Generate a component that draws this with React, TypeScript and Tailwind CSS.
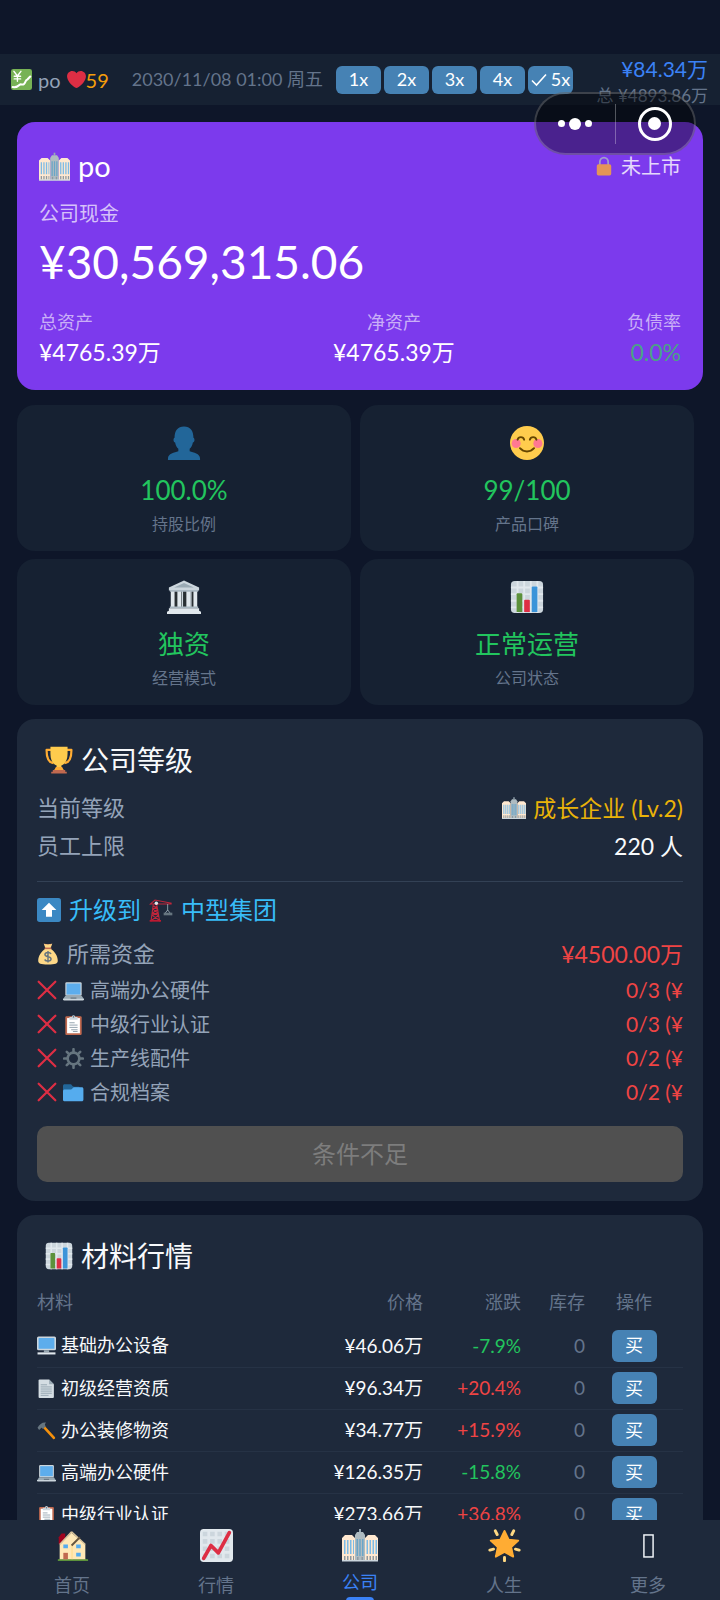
import type { ReactNode } from "react";

type IconProps = { className: string };

function Emoji({ className, children }: { className: string; children: ReactNode }) {
  return (
    <svg viewBox="0 0 36 36" className={`shrink-0 ${className}`} aria-hidden="true">
      {children}
    </svg>
  );
}

const YenChart = ({ className }: IconProps) => (
  <Emoji className={className}>
    <rect width="36" height="36" rx="4" fill="#77b255" />
    <path d="M5 4l6 8 6-8M11 12v9M5.500 12.500h11M5.500 17h11" stroke="#fff" strokeWidth="2.400" fill="none" strokeLinecap="round" />
    <path d="M3 31c6 1 9-1 12-4 2-2 4 1 7-1 4-3 2-7 6-8l5-5" stroke="#fff" strokeWidth="3.600" fill="none" strokeLinecap="round" />
  </Emoji>
);

const Heart = ({ className }: IconProps) => (
  <Emoji className={className}>
    <path
      fill="#dd2e44"
      d="M35.885 11.833c0-5.45-4.418-9.868-9.867-9.868-3.308 0-6.227 1.633-8.018 4.129-1.791-2.496-4.71-4.129-8.017-4.129-5.45 0-9.868 4.417-9.868 9.868 0 .772.098 1.52.266 2.241C1.751 22.587 11.216 31.568 18 34.034c6.783-2.466 16.249-11.447 17.617-19.959.17-.721.268-1.469.268-2.242z"
    />
  </Emoji>
);

const Offices = ({ className }: IconProps) => (
  <Emoji className={className}>
    <path fill="#99aab5" d="M17 2h2v3h-2z" />
    <path fill="#aebbc1" d="M13 34V8l2-3h6l2 3v26z" />
    <path fill="#ffe8d0" d="M0 34V11l3-3h7l3 3v23zM23 34V11l3-3h7l3 3v23z" />
    <path fill="#7dbbe6" d="M2 13h1.500v14H2zM5 13h1.500v14H5zM8 13h1.500v14H8zM11 13h1v14h-1zM24.500 13H26v14h-1.500zM27.500 13H29v14h-1.500zM30.500 13H32v14h-1.500zM33.500 13H35v14h-1.500z" />
    <path fill="#6aa5c8" d="M14.500 12H16v17h-1.500zM17.300 12h1.400v17h-1.400zM20 12h1.500v17H20z" />
    <path fill="#8d9aa2" d="M2 29h1.500v4H2zM5 29h1.500v4H5zM8 29h1.500v4H8zM11 29h1v4h-1zM24.500 29H26v4h-1.500zM27.500 29H29v4h-1.500zM30.500 29H32v4h-1.500zM33.500 29H35v4h-1.500zM15 30h1.500v4H15zM19.500 30H21v4h-1.500z" />
    <path fill="#ccd6dd" d="M0 33h36v1.500H0z" />
  </Emoji>
);

const Lock = ({ className }: IconProps) => (
  <Emoji className={className}>
    <path d="M10.500 17v-6a7.500 8 0 0 1 15 0v6" fill="none" stroke="#aab8c2" strokeWidth="3.200" />
    <rect x="5" y="15" width="26" height="20" rx="3" fill="#ffac33" />
  </Emoji>
);

const Person = ({ className }: IconProps) => (
  <Emoji className={className}>
    <path
      fill="#226699"
      d="M24 26.800v-2.600c1.600-1.200 2.900-3.900 3.400-6.700.9 0 1.700-1.100 1.700-2.600 0-1.300-.4-2.200-1.100-2.500C28 5 24.600.500 18 .500S8 5 8 12.400c-.7.300-1.100 1.200-1.100 2.500 0 1.500.8 2.600 1.700 2.600.5 2.800 1.800 5.500 3.400 6.700v2.600C8 28.300 1 29 1 34.500V36h34v-1.500c0-5.500-7-6.200-11-7.700z"
    />
  </Emoji>
);

const Smile = ({ className }: IconProps) => (
  <Emoji className={className}>
    <circle cx="18" cy="18" r="18" fill="#ffcc4d" />
    <circle cx="6.500" cy="18.500" r="4.800" fill="#ff7892" />
    <circle cx="29.500" cy="18.500" r="4.800" fill="#ff7892" />
    <path d="M8 14.500c1-3.600 6-3.600 7 0M21 14.500c1-3.600 6-3.600 7 0M10.500 23.500c4 4.600 11 4.600 15 0" fill="none" stroke="#664500" strokeWidth="2" strokeLinecap="round" />
  </Emoji>
);

const Bank = ({ className }: IconProps) => (
  <Emoji className={className}>
    <path fill="#292f33" d="M4 12h28v18H4z" />
    <path fill="#e1e8ed" d="M4 11h4v18H4zM11 11h4v18h-4zM20.500 11h4v18h-4zM28 11h4v18h-4z" />
    <path fill="#ccd6dd" d="M15.500 11h1.500v18h-1.500zM24.500 11H26v18h-1.500z" />
    <path fill="#ccd6dd" d="M18 .500L34 8v3H2V8z" />
    <path fill="#9aaab4" d="M18 3.200L28.500 8h-21z" />
    <path fill="#aab8c2" d="M3 10.500h30v2H3zM3 28h30v2H3z" />
    <path fill="#e1e8ed" d="M2 30h32v2.500l2 1V36H0v-2.500l2-1z" />
  </Emoji>
);

const Bars = ({ className }: IconProps) => (
  <Emoji className={className}>
    <rect x="1" y="1" width="34" height="34" rx="4" fill="#ccd6dd" />
    <path stroke="#e1e8ed" strokeWidth="2" d="M8 1v34M15 1v34M22 1v34M29 1v34M1 8h34M1 15h34M1 22h34M1 29h34" />
    <path fill="#5c913b" d="M7 34V15a1 1 0 0 1 1-1h4a1 1 0 0 1 1 1v19z" />
    <path fill="#dd2e44" d="M15 34V22a1 1 0 0 1 1-1h4a1 1 0 0 1 1 1v12z" />
    <path fill="#3b94d9" d="M23 34V8a1 1 0 0 1 1-1h4a1 1 0 0 1 1 1v26z" />
  </Emoji>
);

const Trophy = ({ className }: IconProps) => (
  <Emoji className={className}>
    <path d="M9 5H2c0 8 1 16 9 17M27 5h7c0 8-1 16-9 17" fill="none" stroke="#ffac33" strokeWidth="2.800" strokeLinejoin="round" />
    <path fill="#ffcc4d" d="M7 1h22v9c0 9-4 14-8 15 0 3 1 4 3 6H12c2-2 3-3 3-6-4-1-8-6-8-15z" />
    <path fill="#ffac33" d="M14 27h8l2 4H12z" />
    <path fill="#c1694f" d="M10 31h16v2h2v2.500H8V33h2z" />
  </Emoji>
);

const UpArrow = ({ className }: IconProps) => (
  <Emoji className={className}>
    <rect width="36" height="36" rx="4" fill="#3b88c3" />
    <path fill="#fff" d="M18 7l11 11h-6.500v10h-9V18H7z" />
  </Emoji>
);

const Crane = ({ className }: IconProps) => (
  <Emoji className={className}>
    <path d="M3 35L6.500 9h5L16 35M4.500 33L14 26 6 22l7-5-6-5M15 33L5 26l8-4-7-5 6-5M1 10l8-7 25 5M2 9h32" fill="none" stroke="#c1263b" strokeWidth="1.600" />
    <path fill="#be1931" d="M1 33h17v2.500H1z" />
    <circle cx="11" cy="8" r="2.600" fill="#e1e8ed" />
    <path d="M28 9v10M28 18l-4 5M28 18l4 5" stroke="#99aab5" strokeWidth="1.300" />
    <path fill="#66757f" d="M22 22h13v4H22z" />
  </Emoji>
);

const MoneyBag = ({ className }: IconProps) => (
  <Emoji className={className}>
    <path fill="#bf6952" d="M12 1c2 1.500 10 1.500 12 0l-1 5H13z" />
    <path fill="#fdd888" d="M11 1c3 2 11 2 14 0l-3 8c7 5 12 12 12 20 0 5-4 6-16 6S2 34 2 29C2 21 7 14 14 9z" />
    <path fill="#bf6952" d="M12.500 7.500h11v2.500h-11z" />
    <path d="M23 18c-2-4-10-3-10 1 0 5 10 2 10 7 0 4-8 5-10.500 1M18 13v19" fill="none" stroke="#67757f" strokeWidth="2.400" />
  </Emoji>
);

const Cross = ({ className }: IconProps) => (
  <Emoji className={className}>
    <path d="M3 3l30 30M33 3L3 33" stroke="#dd2e44" strokeWidth="4" strokeLinecap="round" />
  </Emoji>
);

const Laptop = ({ className }: IconProps) => (
  <Emoji className={className}>
    <rect x="4" y="4" width="28" height="23" rx="2" fill="#ccd6dd" />
    <path fill="#5dadec" d="M6 6h24v19H6z" />
    <path fill="#9aaab4" d="M4 27h28l4 6H0z" />
    <path fill="#ccd6dd" d="M0 32h36v1.500c0 1-1 1.500-2 1.500H2c-1 0-2-.5-2-1.500z" />
    <path fill="#66757f" d="M13 30h10v2H13z" />
  </Emoji>
);

const Clipboard = ({ className }: IconProps) => (
  <Emoji className={className}>
    <rect x="4" y="4" width="28" height="32" rx="2" fill="#c1694f" />
    <path fill="#fff" d="M7 7h22v26H7z" />
    <path d="M11 15h9M11 19h14M11 23h14M14 27h11M17 30h8" stroke="#8899a6" strokeWidth="1.500" />
    <path fill="#ccd6dd" d="M11 5h4a3 3 0 0 1 6 0h4v5H11z" />
    <circle cx="18" cy="5" r="1.400" fill="#66757f" />
  </Emoji>
);

const Gear = ({ className }: IconProps) => (
  <Emoji className={className}>
    <circle cx="18" cy="18" r="10" fill="none" stroke="#66757f" strokeWidth="4.500" />
    <path d="M18 2v6M18 28v6M2 18h6M28 18h6M6.500 6.500l4 4M25.500 25.500l4 4M6.500 29.500l4-4M25.500 10.500l4-4" stroke="#66757f" strokeWidth="4.400" strokeLinecap="round" />
  </Emoji>
);

const Folder = ({ className }: IconProps) => (
  <Emoji className={className}>
    <path fill="#226699" d="M0 29V7c0-2 1-3 3-3h9c4 0 3 4 7 4h7c2 0 3 1 3 3v18z" />
    <path fill="#55acee" d="M2 33c-1 0-2-1-2-2V16c0-2 1-3 3-3h10c3 0 3-4 7-4h12c2 0 3 1 3 3v18c0 2-1 3-3 3z" />
  </Emoji>
);

const Monitor = ({ className }: IconProps) => (
  <Emoji className={className}>
    <rect x="0" y="1" width="36" height="26" rx="3" fill="#ccd6dd" />
    <rect x="3" y="4" width="30" height="20" rx="1" fill="#5dadec" />
    <path fill="#9aaab4" d="M13 27h10v4H13z" />
    <path fill="#e1e8ed" d="M1 31h34v4H1z" />
  </Emoji>
);

const Page = ({ className }: IconProps) => (
  <Emoji className={className}>
    <path fill="#d4dde3" d="M5 1h18l9 9v24a2 2 0 0 1-2 2H5a2 2 0 0 1-2-2V3a2 2 0 0 1 2-2z" />
    <path fill="#9aaab4" d="M23 1l9 9h-9z" />
    <path d="M7 11h12M7 15h21M7 19h21M7 23h21M7 27h21M7 31h15" stroke="#8899a6" strokeWidth="1.500" />
  </Emoji>
);

const Hammer = ({ className }: IconProps) => (
  <Emoji className={className}>
    <path d="M12 10l20 22" stroke="#f4900c" strokeWidth="5" strokeLinecap="round" />
    <path fill="#66757f" d="M1 13C5 6 10 2 17 3l-2 3c0 3 2 3 1 5l-5 4c-2-3-3-2-4-1l-3 3z" />
  </Emoji>
);

const House = ({ className }: IconProps) => (
  <Emoji className={className}>
    <path fill="#5c913b" d="M2 33c9-2 23-2 33 0v2H2z" />
    <path fill="#a0041e" d="M3 17V9l3-4h4v6z" />
    <path fill="#ffe8b6" d="M4 17L17 4l15 13v16H4z" />
    <path fill="#ffd983" d="M18 17v16h-1V17z" />
    <path d="M17 3L4 17M17 3l15 14" stroke="#d9c49c" strokeWidth="1.600" />
    <path d="M17 18l9-9" stroke="#66553f" strokeWidth="2" />
    <path fill="#55acee" d="M8 17h5v4H8zM22 17h5v4h-5zM22 26h5v4h-5z" />
    <path fill="#c1694f" d="M8 26h5v7H8z" />
  </Emoji>
);

const Rising = ({ className }: IconProps) => (
  <Emoji className={className}>
    <rect width="36" height="36" rx="4" fill="#e1e8ed" />
    <path fill="#ccd6dd" d="M3 3h5v5H3zM11 3h5v5h-5zM19 3h5v5h-5zM27 3h5v5h-5zM3 11h5v5H3zM11 11h5v5h-5zM19 11h5v5h-5zM27 11h5v5h-5zM3 19h5v5H3zM11 19h5v5h-5zM19 19h5v5h-5zM27 19h5v5h-5zM3 27h5v5H3zM11 27h5v5h-5zM19 27h5v5h-5zM27 27h5v5h-5z" />
    <path d="M4 32l8-14 8 8L32 4" fill="none" stroke="#dd2e44" strokeWidth="4" strokeLinecap="round" strokeLinejoin="round" />
  </Emoji>
);

const Star = ({ className }: IconProps) => (
  <Emoji className={className}>
    <path d="M8 2l2 4M28 2l-2 4M2 23l4-1M34 23l-4-1M18 31v3.500" stroke="#ffd983" strokeWidth="3.200" strokeLinecap="round" />
    <path fill="#ffac33" stroke="#ffac33" strokeWidth="2" strokeLinejoin="round" d="M18 2l4.600 9.500 10.400 1.200-7.700 7.100 2.200 10.400L18 25l-9.500 5.200 2.200-10.400L3 12.700l10.400-1.200z" />
  </Emoji>
);

const MissingGlyph = ({ className }: IconProps) => (
  <Emoji className={className}>
    <rect x="13" y="6.500" width="10" height="24" fill="none" stroke="#f1f5f9" strokeWidth="1.600" />
  </Emoji>
);

const speeds = ["1x", "2x", "3x", "4x"];

const stats = [
  { Icon: Person, value: "100.0%", label: "持股比例" },
  { Icon: Smile, value: "99/100", label: "产品口碑" },
  { Icon: Bank, value: "独资", label: "经营模式" },
  { Icon: Bars, value: "正常运营", label: "公司状态" },
];

const needs = [
  { Icon: Laptop, name: "高端办公硬件", have: "0/3 (¥" },
  { Icon: Clipboard, name: "中级行业认证", have: "0/3 (¥" },
  { Icon: Gear, name: "生产线配件", have: "0/2 (¥" },
  { Icon: Folder, name: "合规档案", have: "0/2 (¥" },
];

const materials = [
  { Icon: Monitor, name: "基础办公设备", price: "¥46.06万", change: "-7.9%" },
  { Icon: Page, name: "初级经营资质", price: "¥96.34万", change: "+20.4%" },
  { Icon: Hammer, name: "办公装修物资", price: "¥34.77万", change: "+15.9%" },
  { Icon: Laptop, name: "高端办公硬件", price: "¥126.35万", change: "-15.8%" },
  { Icon: Clipboard, name: "中级行业认证", price: "¥273.66万", change: "+36.8%" },
];

const tabs = [
  { Icon: House, label: "首页" },
  { Icon: Rising, label: "行情" },
  { Icon: Offices, label: "公司" },
  { Icon: Star, label: "人生" },
  { Icon: MissingGlyph, label: "更多" },
];

function Header() {
  return (
    <header className="flex h-[51px] shrink-0 items-center bg-[#162132] pr-3 pl-[11px] text-[18px] whitespace-nowrap">
      <YenChart className="size-[21px]" />
      <span className="ml-[6px] text-[20px] text-[#94a3b8]">po</span>
      <Heart className="ml-[6px] size-[19px]" />
      <span className="text-[20px] text-[#f59e0b]">59</span>
      <span className="ml-[23px] text-[#64748b]">2030/11/08 01:00 周五</span>
      <div className="ml-auto flex gap-[3px] text-white">
        {speeds.map((s) => (
          <button key={s} type="button" className="h-7 w-[45px] rounded-md bg-[#4682b4]">
            {s}
          </button>
        ))}
        <button type="button" aria-pressed="true" className="flex h-7 w-[45px] items-center justify-center gap-1 rounded-md bg-[#4682b4]">
          <svg viewBox="0 0 16 14" className="h-[14px] w-4" aria-hidden="true">
            <path d="M1 7.500l4.500 4.500L15 1.500" fill="none" stroke="#fff" strokeWidth="1.600" />
          </svg>
          5x
        </button>
      </div>
      <div className="flex w-[135px] flex-col items-end pt-1 text-right">
        <span className="text-[21px] leading-7 text-[#3b82f6]">¥84.34万</span>
        <span className="text-[17px] leading-[26px] text-[#64748b]">总 ¥4893.86万</span>
      </div>
    </header>
  );
}

function Capsule() {
  return (
    <div className="fixed top-[92px] right-6 z-10 flex h-[63px] w-[162px] items-center rounded-full border-2 border-white/20 bg-black/40">
      <button type="button" aria-label="更多操作" className="flex flex-1 items-center justify-center gap-1">
        <span className="size-[7px] rounded-full bg-white" />
        <span className="size-3 rounded-full bg-white" />
        <span className="size-[7px] rounded-full bg-white" />
      </button>
      <span className="h-10 w-px bg-white/30" />
      <button type="button" aria-label="关闭" className="flex flex-1 justify-center">
        <span className="flex size-[34px] items-center justify-center rounded-full border-[3px] border-white">
          <span className="size-[13px] rounded-full bg-white" />
        </span>
      </button>
    </div>
  );
}

function CashCard() {
  return (
    <section className="rounded-[18px] bg-[#7c3aed] px-[22px] pt-6 pb-[22px] text-white">
      <div className="flex h-10 items-center justify-between">
        <h1 className="flex items-center gap-2 text-[29px]">
          <Offices className="size-[31px]" />
          po
        </h1>
        <span className="flex items-center gap-[7px] text-[20px] text-white/80">
          <Lock className="size-5 opacity-80" />
          未上市
        </span>
      </div>
      <p className="mt-[13px] text-[20px] leading-7 text-white/70">公司现金</p>
      <p className="mt-[7px] text-[46px] leading-[56px]">¥30,569,315.06</p>
      <dl className="mt-[18px] flex justify-between text-center">
        <div>
          <dt className="text-left text-[18px] leading-7 text-white/60">总资产</dt>
          <dd className="text-[23px] leading-8">¥4765.39万</dd>
        </div>
        <div>
          <dt className="text-[18px] leading-7 text-white/60">净资产</dt>
          <dd className="text-[23px] leading-8">¥4765.39万</dd>
        </div>
        <div>
          <dt className="text-[18px] leading-7 text-white/60">负债率</dt>
          <dd className="text-right text-[23px] leading-8 text-[#4aa287]">0.0%</dd>
        </div>
      </dl>
    </section>
  );
}

function Stats() {
  return (
    <section className="mt-[15px] mr-[9px] grid grid-cols-2 gap-x-[9px] gap-y-2">
      {stats.map(({ Icon, value, label }) => (
        <div key={label} className="flex flex-col items-center rounded-[18px] bg-[#162132] pt-[21px] pb-[15px]">
          <Icon className="size-[34px]" />
          <span className="mt-3 text-[26px] leading-9 text-[#22c55e]">{value}</span>
          <span className="mt-1 text-[16px] leading-6 text-[#64748b]">{label}</span>
        </div>
      ))}
    </section>
  );
}

function LevelCard() {
  return (
    <section className="mt-[14px] rounded-[18px] bg-[#1e293b] px-5 pt-[23px] pb-[19px] text-[22px] text-[#94a3b8]">
      <h2 className="flex items-center gap-2 pl-2 text-[28px] leading-9 text-[#f8fafc]">
        <Trophy className="size-7" />
        公司等级
      </h2>
      <div className="mt-[11px] flex items-center justify-between leading-[38px]">
        <span>当前等级</span>
        <span className="flex items-center gap-[7px] text-[23px] text-[#eab308]">
          <Offices className="size-6" />
          成长企业 (Lv.2)
        </span>
      </div>
      <div className="flex items-center justify-between leading-[38px]">
        <span>员工上限</span>
        <span className="text-[23px] text-[#f8fafc]">220 人</span>
      </div>
      <hr className="mt-4 border-[#334155]" />
      <h3 className="mt-[10px] flex items-center text-[24px] leading-9 text-[#38bdf8]">
        <UpArrow className="mr-2 size-6" />
        升级到
        <Crane className="mx-2 size-6" />
        中型集团
      </h3>
      <div className="mt-2 flex items-center justify-between leading-9">
        <span className="flex items-center gap-2">
          <MoneyBag className="size-[22px]" />
          所需资金
        </span>
        <span className="text-[23px] text-[#ef4444]">¥4500.00万</span>
      </div>
      <ul className="mt-px text-[20px] leading-[34px]">
        {needs.map(({ Icon, name, have }) => (
          <li key={name} className="flex items-center">
            <Cross className="size-5" />
            <Icon className="mx-[6px] size-[21px]" />
            {name}
            <span className="ml-auto text-[21px] text-[#ef4444]">{have}</span>
          </li>
        ))}
      </ul>
      <button type="button" disabled className="mt-[17px] h-14 w-full rounded-[10px] bg-[#505050] text-[24px] text-[#7d7d7d]">
        条件不足
      </button>
    </section>
  );
}

function MaterialCard() {
  return (
    <section className="mt-[14px] rounded-t-[18px] bg-[#1e293b] px-5 pt-[23px] pb-5">
      <h2 className="flex items-center gap-2 pl-2 text-[28px] leading-9 text-[#f8fafc]">
        <Bars className="size-7" />
        材料行情
      </h2>
      <table className="mt-2 w-full table-fixed text-right text-[18px]">
        <thead>
          <tr className="h-[43px] text-[#64748b]">
            <th className="pb-[3px] text-left font-normal">材料</th>
            <th className="w-[166px] pb-[3px] font-normal">价格</th>
            <th className="w-[98px] pb-[3px] font-normal">涨跌</th>
            <th className="w-16 pb-[3px] font-normal">库存</th>
            <th className="w-[98px] pb-[3px] text-center font-normal">操作</th>
          </tr>
        </thead>
        <tbody>
          {materials.map(({ Icon, name, price, change }) => (
            <tr key={name} className="h-[42px] border-b border-[#334155]/40 text-[#f8fafc]">
              <td>
                <span className="flex items-center gap-[5px]">
                  <Icon className="size-[19px]" />
                  {name}
                </span>
              </td>
              <td className="text-[19px]">{price}</td>
              <td className={change.startsWith("+") ? "text-[19px] text-[#ef4444]" : "text-[19px] text-[#22c55e]"}>{change}</td>
              <td className="text-[19px] text-[#64748b]">0</td>
              <td className="text-center">
                <button type="button" aria-label={`买 ${name}`} className="h-8 w-[45px] rounded-md bg-[#4682b4] align-middle text-white">
                  买
                </button>
              </td>
            </tr>
          ))}
        </tbody>
      </table>
    </section>
  );
}

function TabBar() {
  return (
    <nav className="grid h-20 shrink-0 grid-cols-5 overflow-hidden bg-[#1e293b] text-[18px]">
      {tabs.map(({ Icon, label }) => {
        const active = label === "公司";
        return (
          <a
            key={label}
            href="#"
            aria-current={active ? "page" : undefined}
            className={`flex flex-col items-center ${active ? "pt-[7px] text-[#3b82f6]" : "pt-[9px] text-[#64748b]"}`}
          >
            <Icon className={active ? "size-9" : "size-[33px]"} />
            <span className={active ? "mt-[6px] leading-[26px]" : "mt-[10px] leading-[26px]"}>{label}</span>
            {active && <span className="mt-[2px] h-1 w-7 shrink-0 rounded-t-sm bg-[#3b82f6]" />}
          </a>
        );
      })}
    </nav>
  );
}

export default function App() {
  return (
    <div className="flex h-screen flex-col overflow-hidden bg-[#0e1629] pt-[54px] font-[Lato,'Noto_Sans_CJK_SC',sans-serif]">
      <Header />
      <Capsule />
      <main className="min-h-0 flex-1 overflow-y-auto px-[17px] pt-[17px] [scrollbar-width:none]">
        <CashCard />
        <Stats />
        <LevelCard />
        <MaterialCard />
      </main>
      <TabBar />
    </div>
  );
}
